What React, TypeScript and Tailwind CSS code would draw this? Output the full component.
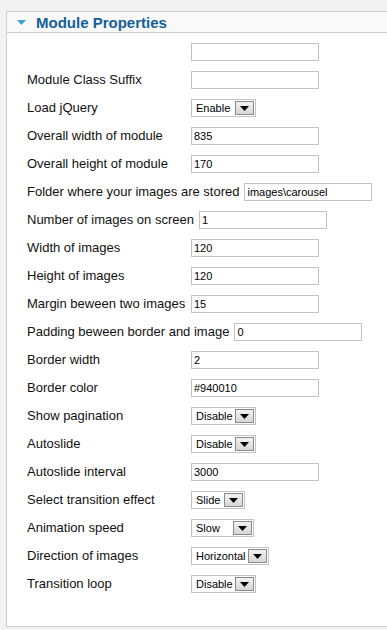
import { ReactNode } from "react";

type Row =
  | { label: string; kind: "input"; value: string; width?: string }
  | { label: string; kind: "select"; value: string; width: string };

const rows: Row[] = [
  { label: "", kind: "input", value: "" },
  { label: "Module Class Suffix", kind: "input", value: "" },
  { label: "Load jQuery", kind: "select", value: "Enable", width: "w-[65px]" },
  { label: "Overall width of module", kind: "input", value: "835" },
  { label: "Overall height of module", kind: "input", value: "170" },
  { label: "Folder where your images are stored", kind: "input", value: "images\\carousel" },
  { label: "Number of images on screen", kind: "input", value: "1" },
  { label: "Width of images", kind: "input", value: "120" },
  { label: "Height of images", kind: "input", value: "120" },
  { label: "Margin beween two images", kind: "input", value: "15" },
  { label: "Padding beween border and image", kind: "input", value: "0" },
  { label: "Border width", kind: "input", value: "2" },
  { label: "Border color", kind: "input", value: "#940010" },
  { label: "Show pagination", kind: "select", value: "Disable", width: "w-[65px]" },
  { label: "Autoslide", kind: "select", value: "Disable", width: "w-[65px]" },
  { label: "Autoslide interval", kind: "input", value: "3000" },
  { label: "Select transition effect", kind: "select", value: "Slide", width: "w-[54px]" },
  { label: "Animation speed", kind: "select", value: "Slow", width: "w-[63px]" },
  { label: "Direction of images", kind: "select", value: "Horizontal", width: "w-[78px]" },
  { label: "Transition loop", kind: "select", value: "Disable", width: "w-[65px]" },
];

function TextBox({ value }: { value: string }) {
  return (
    <div className="w-[128px] h-[18px] border border-[#c3c3c3] bg-white flex items-center pl-[2px] text-[11px] text-black">
      {value}
    </div>
  );
}

function SelectBox({ value, width }: { value: string; width: string }) {
  return (
    <div className={`${width} h-[18px] border border-[#c3c3c3] bg-white flex items-center justify-between text-[11px] text-black`}>
      <span className="pl-[4px]">{value}</span>
      <span className="w-[19px] h-[14px] mr-[1px] border border-[#8a8a8a] bg-gradient-to-b from-[#f2f2f2] to-[#d6d6d6] flex items-center justify-center">
        <svg width="9" height="5" viewBox="0 0 9 5">
          <polygon points="0,0 9,0 4.5,5" fill="#000" />
        </svg>
      </span>
    </div>
  );
}

function Field({ label, children }: { label: string; children: ReactNode }) {
  return (
    <div className="flex items-center h-[18px]">
      <label className="min-w-[164px] pr-[5px] text-[13px] text-[#111] whitespace-nowrap">{label}</label>
      {children}
    </div>
  );
}

function App() {
  return (
    <div
      className="min-h-screen bg-[#f2f2f2] pt-[11px] pl-[6px] overflow-hidden"
      style={{ fontFamily: '"Liberation Sans", Arial, sans-serif' }}
    >
      <div className="w-[400px] border border-[#cccccc] bg-white">
        <div className="h-[21px] bg-[#f9f9f9] border-b border-[#cccccc] flex items-center pl-[10px]">
          <svg width="9" height="6" viewBox="0 0 9 6" className="mt-[2px]">
            <polygon points="0,0 9,0 4.5,5" fill="#3d9fd6" />
          </svg>
          <h3 className="ml-[10px] text-[15px] font-bold text-[#13609a] leading-none">Module Properties</h3>
        </div>
        <div className="pl-[20px] pt-[10px] pb-[33px] flex flex-col gap-[10px]">
          {rows.map((r, i) => (
            <Field key={i} label={r.label}>
              {r.kind === "input" ? <TextBox value={r.value} /> : <SelectBox value={r.value} width={r.width} />}
            </Field>
          ))}
        </div>
      </div>
    </div>
  );
}

export default App;
